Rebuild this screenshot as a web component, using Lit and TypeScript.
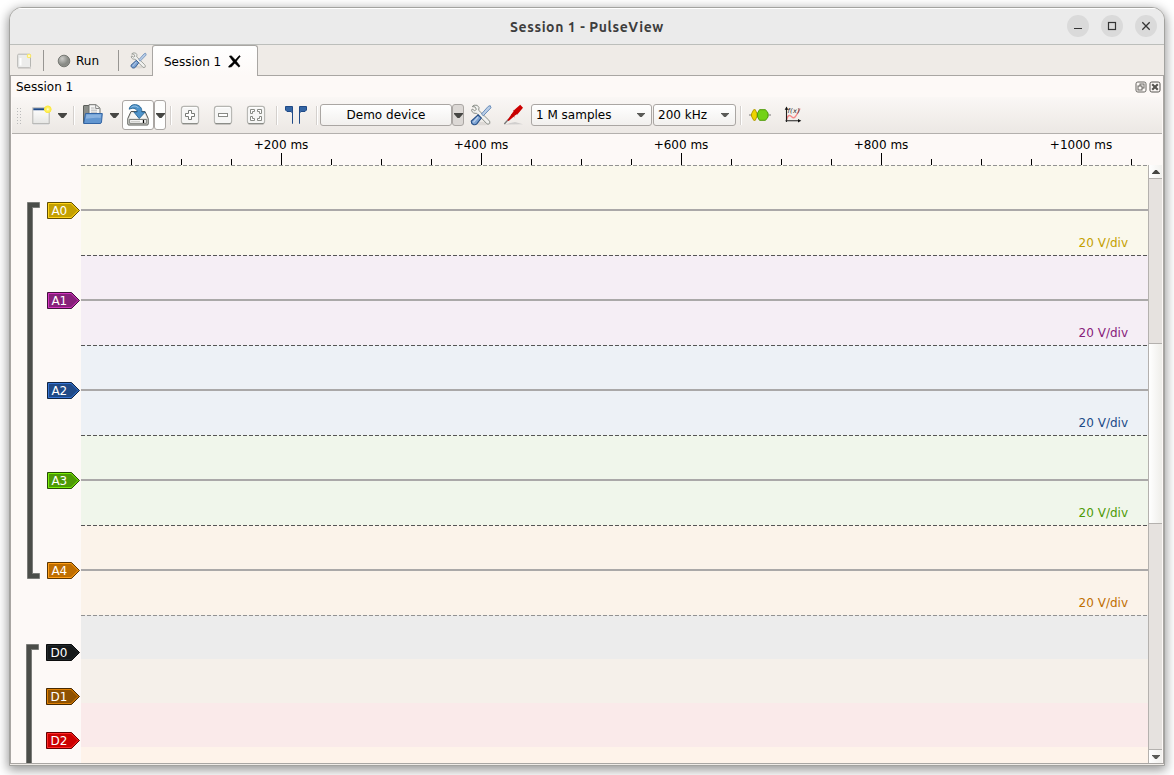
import { LitElement, html, svg, css } from "lit";
import { customElement } from "lit/decorators.js";

interface Trace {
  name: string;
  fill: string;
  light: string;
  dark: string;
  band: string;
}

const ANALOG: Trace[] = [
  { name: "A0", fill: "#c4a000", light: "#ffd319", dark: "#624f00", band: "#faf8ec" },
  { name: "A1", fill: "#87207a", light: "#d435c0", dark: "#43103d", band: "#f5eef5" },
  { name: "A2", fill: "#204a87", light: "#3674d4", dark: "#102543", band: "#edf1f6" },
  { name: "A3", fill: "#4e9a06", light: "#78ee09", dark: "#274d03", band: "#f0f6eb" },
  { name: "A4", fill: "#bf6e00", light: "#ff9f19", dark: "#5f3700", band: "#fbf3ea" },
];

const DIGITAL: Trace[] = [
  { name: "D0", fill: "#16191a", light: "#22282a", dark: "#0b0c0d", band: "#ececec" },
  { name: "D1", fill: "#8f5202", light: "#df8003", dark: "#472901", band: "#f5f0ea" },
  { name: "D2", fill: "#cc0000", light: "#ff2b2b", dark: "#660000", band: "#faeaea" },
];

const flag = (t: Trace, width: number) => html`
  <svg class="flag" width=${width} height="17" viewBox="0 0 ${width} 17">
    <path d="M.5.5H${width - 8.5}L${width - 0.5} 8.5L${width - 8.5} 16.5H.5Z" fill=${t.fill} stroke=${t.dark}/>
    <path d="M1.5 1.5H${width - 8.9}L${width - 1.9} 8.5L${width - 8.9} 15.5H1.5Z" fill="none" stroke=${t.light}/>
    <text x="4.4" y="13" fill="#fff" font-size="12">${t.name}</text>
  </svg>`;

const down = html`<svg width="9" height="5" viewBox="0 0 9 5"><path d="M0 0H9V1L5.5 5H3.5L0 1Z" fill="#464643"/></svg>`;
const comboArrow = html`<svg width="8" height="4" viewBox="0 0 8 4"><path d="M0 0H8V.6L4.8 4H3.2L0 .6Z" fill="#5a5a57"/></svg>`;

const tools = (size: number) => html`
  <svg width=${size} height=${size} viewBox="0 0 22 22">
    <ellipse cx="12" cy="19.5" rx="9" ry="1.8" fill="#000" opacity=".08"/>
    <path d="M2.2 2.6L4 1.2L7.2 1.3L9 3.5L8.7 6.3L18.8 16.2C21 18 19.3 21.3 16.8 19.7L6.7 9.3C4.5 9.8 1.9 8.6 1.6 6.3L2.2 5L4.7 6.7L6.4 5.4L5 2.9Z" fill="#f1f1ef" stroke="#80847e" stroke-width=".9"/>
    <path d="M20.2 1.6L21 3.8L13.3 11.8L11.4 10L18.2 2.4Z" fill="#b9cde6" stroke="#4e78ad" stroke-width=".8"/>
    <path d="M8.2 10.8L11.3 14L7 19.7C4.8 21.9 1 20.4 1.3 17.1Z" fill="#7da3d3" stroke="#264f87" stroke-width="1.1"/>
    <path d="M8 13L3.4 18.3" stroke="#c0d3ec" stroke-width="1.2"/>
  </svg>`;

const newIcon = html`
  <svg width="20" height="20" viewBox="0 0 20 20">
    <defs><linearGradient id="sheet" x2="0" y2="1"><stop stop-color="#fff"/><stop offset="1" stop-color="#e6e6e4"/></linearGradient>
    <radialGradient id="spark"><stop stop-color="#fffff0"/><stop offset=".35" stop-color="#fff36a"/><stop offset=".8" stop-color="#fce83f"/><stop offset="1" stop-color="#fce83f" stop-opacity="0"/></radialGradient></defs>
    <rect x=".8" y="2.8" width="16.4" height="15.7" fill="url(#sheet)" stroke="#b5b5b2"/>
    <path d="M1.3 3.2H16.8V5.2H1.3Z" fill="#204a87"/><path d="M1 19.4H17" stroke="#ddd"/>
    <circle cx="15.8" cy="4.3" r="4.2" fill="url(#spark)"/>
  </svg>`;

const tabNewIcon = html`
  <svg width="15" height="16" viewBox="0 0 15 16">
    <rect x=".7" y="1.2" width="12.8" height="13.5" rx="1" fill="#ececeb" stroke="#b5b5b2"/>
    <path d="M3.5 5V12.5" stroke="#fff" stroke-width="2"/><path d="M1 15.4H14" stroke="#d5d2ce"/>
    <circle cx="12" cy="3" r="2.3" fill="#fbe96b"/><circle cx="12" cy="3" r="1" fill="#fffde0"/>
  </svg>`;

const openIcon = html`
  <svg width="21" height="21" viewBox="0 0 21 21">
    <path d="M1.5 19V2Q1.5 1.5 2 1.5H7.5L9.5 3.5H17V19Z" fill="#8a8d89" stroke="#5c5f5b"/>
    <path d="M7 10V.7H14L18 4.2V11H7Z" fill="#f6f6f5" stroke="#6f726e"/>
    <path d="M13.7 1V4.5H17.5" fill="none" stroke="#888"/><path d="M9 4H12.5M9 6.2H15M9 8.2H15" stroke="#a8a8a8" stroke-width=".8"/>
    <path d="M3.5 9.5H20.3L19.5 18Q19.3 19.5 18 19.5H1.7Z" fill="#6296d0" stroke="#3465a4"/>
    <path d="M4.4 10.6H19L18.6 14C12 13 8 14.5 3.8 14.8Z" fill="#8ab3e0"/>
  </svg>`;

const saveIcon = html`
  <svg width="22" height="22" viewBox="0 0 22 22">
    <path d="M4 7.5H18L21.2 14.5V20Q21.2 21 20.2 21H1.8Q.8 21 .8 20V14.5Z" fill="#e5e5e2" stroke="#555753"/>
    <path d="M4.7 8.7H17.3L19.5 14H2.5Z" fill="#f6f6f4"/>
    <rect x="2.7" y="15.5" width="16.6" height="3.8" fill="#fff" stroke="#70736f" stroke-width=".9"/>
    <path d="M4 17.5H13" stroke="#d0d0cd" stroke-width="1.5"/><path d="M16.5 16V19" stroke="#000" stroke-width="1.3"/>
    <path d="M2.2 5.2C2.6 .2 9.8-1 13.4 3C14.6 4.4 14.8 6 14.8 8H18.2L12.2 14.6L6.9 8H10.2C10.3 5 7 3.2 2.2 5.2Z" fill="#4f94cb" stroke="#276594" stroke-width=".9"/>
    <path d="M4.5 3.3C6.5 1.2 10 2 11.5 4" fill="none" stroke="#9bc5e5"/>
  </svg>`;

const zoomIcon = (kind: "in" | "out" | "fit") => html`
  <svg width="20" height="20" viewBox="0 0 20 20">
    <rect x="1.4" y="1.4" width="17.2" height="17.4" rx="2.6" fill="#f6f6f5" stroke="#b5b5b1" stroke-width="1.1"/>
    <path d="M2.5 18.8H17.5" stroke="#777a75" stroke-width="1.1"/><path d="M3 2.7H17" stroke="#fff"/>
    ${kind === "in" ? svg`<path d="M8.5 5.5H11.5V8.5H14.5V11.5H11.5V14.5H8.5V11.5H5.5V8.5H8.5Z" fill="#fff" stroke="#777a76"/>` : ""}
    ${kind === "out" ? svg`<rect x="5.5" y="8.5" width="9" height="3" fill="#fff" stroke="#888a85"/>` : ""}
    ${kind === "fit" ? svg`<path d="M4.5 4.5H8.5V6.5H6.5V8.5H4.5ZM11.5 4.5H15.5V8.5H13.5V6.5H11.5ZM4.5 11.5H6.5V13.5H8.5V15.5H4.5ZM13.5 11.5H15.5V15.5H11.5V13.5H13.5Z" fill="#fff" stroke="#888a85"/>` : ""}
  </svg>`;

const cursorsIcon = html`
  <svg width="22" height="18" viewBox="0 0 22 18">
    <path d="M.5.5H7.5V17.5V7L6 5.5H2L.5 4Z M21.5.5H14.5V17.5V7L16 5.5H20L21.5 4Z" fill="#3465a4" stroke="#204a87"/>
  </svg>`;

const probeIcon = html`
  <svg width="21" height="22" viewBox="0 0 21 22">
    <path d="M1 20.5L12 18L20 20.3Z" fill="#bbb" opacity=".6"/>
    <path d="M1.3 20L6 14.8" stroke="#777" stroke-width="1.3"/>
    <path d="M4.4 16.2L9.5 8.7L11.5 5.7L17.2.8L20 3.7L15.2 9.4L12.3 11.2L5.7 17Z" fill="#cc0000"/>
    <path d="M8 10.3L11.7 13M10.2 6.2L15 10.4" stroke="#a80000" stroke-width=".6"/>
  </svg>`;

const decoderIcon = html`
  <svg width="22" height="12" viewBox="0 0 22 12">
    <path d="M0 6H22" stroke="#777" stroke-width="1.2"/>
    <path d="M4.7.7H6.3L8 4.8V7.2L6.3 11.3H4.7L2.5 7.2V4.8Z" fill="#edd400" stroke="#b39b00"/>
    <path d="M10.5.7H16.5L19 4V8L16.5 11.3H10.5L8.6 8V4Z" fill="#73d216" stroke="#4e9a06"/>
  </svg>`;

const mathIcon = html`
  <svg width="18" height="18" viewBox="0 0 18 18">
    <path d="M2.5 14C4 8 6 9 8 11S12 11 16 2.5" fill="none" stroke="#f58a8a" stroke-width="1.4"/>
    <path d="M2.5 16V3M1.5 14.8H15" stroke="#222" stroke-width="1.1"/>
    <path d="M2.5 .6L4.3 3.8H.7ZM17.3 14.8L14 16.5V13.1Z" fill="#111"/>
    <text x="3.4" y="6.6" font-size="6.5" font-style="italic" fill="#222" textLength="12.5">f(x)</text>
  </svg>`;

@customElement("app-root")
export class AppRoot extends LitElement {
  static styles = css`
    :host { display: block; width: 1174px; height: 775px; overflow: hidden; background: #fff;
      font: 12px/16px "DejaVu Sans", sans-serif; color: #000; }
    * { box-sizing: border-box; }
    svg { display: block; flex: none; font-family: "DejaVu Sans", sans-serif; }
    .desktop { width: 1174px; height: 775px; padding: 7px 9px 9px 9px; overflow: hidden; }
    .window { width: 1156px; height: 759px; border: 1px solid #a3a3a0; border-radius: 13px 13px 0 0; overflow: hidden;
      box-shadow: 0 3px 11px 1px rgba(0,0,0,.42); background: #efebe7; display: flex; flex-direction: column; }
    .titlebar { height: 37px; flex: none; border-bottom: 1px solid #bcbebb; box-shadow: inset 0 1px #fff; background: #ebebeb;
      display: grid; grid-template-columns: 1fr auto 1fr; align-items: center; }
    .caption { grid-column: 2; font: bold 14px/20px "Ubuntu", "Noto Sans", sans-serif; letter-spacing: .6px; color: #3d3d3d; width: 154px; white-space: nowrap; padding-top: 2px; }
    .winbtns { display: flex; justify-content: flex-end; gap: 12px; padding-right: 7px; }
    .winbtn { width: 22px; height: 22px; border-radius: 50%; background: #dadada; display: grid; place-items: center; }
    .tabbar { height: 31px; flex: none; display: flex; align-items: center; border-bottom: 1px solid #a9a6a3; }
    .tabbar .new { margin: 1px 11px 0 7px; }
    .tabbar .setup { margin: 1px 0 0 11px; }
    .vline { width: 1px; height: 21px; background: #979592; margin-top: 1px; }
    .run { display: flex; align-items: center; gap: 5px; margin-left: 13px; width: 61px; padding-top: 2px; }
    .run svg { margin-top: -1px; }
    .tab { align-self: flex-start; width: 106px; height: 31px; margin-left: 5px; border: 1px solid #a9a6a3; border-bottom: 0; border-radius: 3px 3px 0 0;
      background: linear-gradient(#fff, #fdf9f7); display: flex; align-items: center; padding: 2px 0 0 11px; gap: 7px; position: relative; }
    .tab svg { margin-top: -1px; }
    .client { flex: 1; min-height: 0; border: solid #a9a6a3; border-width: 0 1px 1px 1px; background: #fdf9f7; display: flex; flex-direction: column; margin-bottom: 1px; }
    .docktitle { height: 21px; flex: none; display: flex; align-items: center; padding: 1px 2px 0 5px; }
    .docktitle .name { flex: 1; }
    .docktitle svg + svg { margin-left: 2px; }
    .docktitle svg { margin-top: -1px; }
    .toolbar { height: 37px; flex: none; margin: 0 1px; background: linear-gradient(#faf7f5, #ece8e4); border-bottom: 1px solid #b3b0ad;
      display: flex; align-items: center; }
    .grip { width: 6px; height: 17px; background: radial-gradient(circle, #bbb 35%, transparent 45%) 0 0 / 3px 3px; margin: 0 10px 0 4px; }
    .sep { width: 2px; height: 19px; background: linear-gradient(90deg, #d4d0cd 50%, #fff 50%); }
    .tbtn { height: 30px; border: 1px solid #aaa6a3; border-radius: 3px; background: linear-gradient(#fdfdfc, #fff); display: grid; place-items: center; }
    .tbtn.save { width: 32px; margin-left: 3px; }
    .tbtn.split { width: 12px; }
    .combo { height: 22px; border: 1px solid #aaa6a3; border-radius: 3px; background: linear-gradient(#fff, #f2f0ee);
      display: flex; align-items: center; justify-content: space-between; padding: 0 6px 0 4px; }
    .combo.device { width: 132px; margin-left: 2px; justify-content: center; padding: 0; }
    .combo.more { width: 12px; padding: 0; background: #dcd8d5; justify-content: center; }
    .combo.count { width: 121px; margin-left: 7px; }
    .combo.rate { width: 83px; margin-left: 1px; }
    .open { margin: -2px 0 0 7px; }
    .ruler { height: 31px; flex: none; margin-left: 70px; }
    .view { flex: 1; min-height: 0; display: flex; }
    .traces { flex: 1; min-width: 0; overflow: hidden; }
    .group { display: flex; }
    .bracket { width: 36px; flex: none; }
    .digital .bracket { width: 35px; }
    .rows { flex: 1; min-width: 0; }
    .row { display: flex; }
    .head { width: 34px; flex: none; display: flex; justify-content: flex-end; padding-right: 1px; }
    .analog .head { padding-top: 37px; }
    .digital .head { padding-top: 29px; width: 35px; }
    .digital .first .head { padding-top: 28px; }
    .analog .row { height: 90px; }
    .digital .row { height: 44px; }
    .digital .row.first { height: 43px; }
    .digital .row.last { height: 17px; }
    .band { flex: 1; display: flex; flex-direction: column; }
    .dash { height: 1px; background: repeating-linear-gradient(90deg, var(--dash, #555) 0 4px, transparent 4px 6px); }
    .row.first .dash, .tail { --dash: #929292; }
    .tail { height: 1px; flex: none; margin-left: 35px; background-color: #ececec; }
    .zero { height: 2px; margin-top: 43px; background: #aaa8a8; }
    .scale { padding-top: 24px; padding-right: 20px; text-align: right; }
    .scroll { width: 14px; flex: none; border-left: 1px solid #b4b1ae; background: #e6e2df; display: flex; flex-direction: column; margin-right: 1px; }
    .arrow { height: 14px; flex: none; background: linear-gradient(90deg, #fff, #f2f1ee); border-bottom: 1px solid #b4b1ae; display: grid; place-items: center; padding-top: 1px; }
    .arrow.end { margin-top: auto; border-bottom: 0; border-top: 1px solid #b4b1ae; padding: 0; }
    .thumb { height: 181px; margin-top: 164px; background: linear-gradient(90deg, #fff, #efeeea); border: solid #b4b1ae; border-width: 1px 0; }
    .m4 { margin-left: 4px; } .m6 { margin-left: 6px; } .m7 { margin-left: 7px; } .m8 { margin-left: 8px; }
    .m9 { margin-left: 9px; } .m10 { margin-left: 10px; } .m11 { margin-left: 11px; } .m13 { margin-left: 13px; }
  `;

  private renderRuler() {
    const ticks = Array.from({ length: 21 }, (_, i) => 50 + i * 50);
    return html`<svg class="ruler" width="1082" height="31" viewBox="0 0 1082 31">
      ${ticks.map(x => svg`<path d=${x % 200 === 0 ? `M${x + 0.5} 19V31` : `M${x + 0.5} 25V31`} stroke="#000"/>`)}
      ${[200, 400, 600, 800, 1000].map(x => svg`<text x=${x} y="15" font-size="12" text-anchor="middle">+${x} ms</text>`)}
    </svg>`;
  }

  render() {
    return html`<div class="desktop"><div class="window">
      <div class="titlebar">
        <div class="caption">Session 1 - PulseView</div>
        <div class="winbtns">
          <div class="winbtn"><svg width="10" height="10"><path d="M1 7.5H9" stroke="#333" stroke-width="1.1"/></svg></div>
          <div class="winbtn"><svg width="10" height="10"><rect x="1.5" y="1.5" width="7" height="7" fill="none" stroke="#333" stroke-width="1.2"/></svg></div>
          <div class="winbtn"><svg width="10" height="10"><path d="M1.3 1.3L8.7 8.7M8.7 1.3L1.3 8.7" stroke="#333" stroke-width="1.3"/></svg></div>
        </div>
      </div>
      <div class="tabbar">
        <span class="new">${tabNewIcon}</span>
        <span class="vline"></span>
        <div class="run">
          <svg width="14" height="14" viewBox="0 0 14 14"><defs><radialGradient id="led" cx=".35" cy=".3"><stop stop-color="#ccccc9"/><stop offset="1" stop-color="#898b86"/></radialGradient></defs><circle cx="7" cy="7" r="5.8" fill="url(#led)" stroke="#777974"/></svg>
          <span>Run</span>
        </div>
        <span class="vline"></span>
        <span class="setup">${tools(17)}</span>
        <div class="tab"><span>Session 1</span>
          <svg width="13" height="13" viewBox="0 0 13 13"><path d="M1.3 1.2L3.3.7Q7.5 4.5 12 11L11 12.2Q5 7.5 1.3 1.2ZM11.3.5L12.3 1.3Q8 7 3.6 11.8L.8 12.3L.7 11.2Q6.5 6.5 11.3.5Z" fill="#000" stroke="#000" stroke-width=".5"/></svg>
        </div>
      </div>
      <div class="client">
        <div class="docktitle"><span class="name">Session 1</span>
          <svg width="12" height="12" viewBox="0 0 12 12" fill="none" stroke="#666460"><rect x="1" y="1" width="10" height="10" rx="1.8"/><rect x="5" y="3" width="4" height="4"/><rect x="3" y="5" width="4" height="4" fill="#fdf9f7"/></svg>
          <svg width="12" height="12" viewBox="0 0 12 12" fill="none" stroke="#55534f"><rect x="1" y="1" width="10" height="10" rx="1.8"/><path d="M3.2 3.2L8.8 8.8M8.8 3.2L3.2 8.8" stroke-width="2.1"/></svg>
        </div>
        <div class="toolbar">
          <span class="grip"></span>
          <span>${newIcon}</span><span class="m6">${down}</span>
          <span class="sep m6"></span>
          <span class="open">${openIcon}</span><span class="m7">${down}</span>
          <span class="tbtn save">${saveIcon}</span>
          <span class="tbtn split">${down}</span>
          <span class="sep m4"></span>
          <span class="m8">${zoomIcon("in")}</span>
          <span class="m13">${zoomIcon("out")}</span>
          <span class="m13">${zoomIcon("fit")}</span>
          <span class="sep m10"></span>
          <span class="m7">${cursorsIcon}</span>
          <span class="sep m9"></span>
          <span class="combo device">Demo device</span>
          <span class="combo more">${down}</span>
          <span class="m6">${tools(22)}</span>
          <span class="m11">${probeIcon}</span>
          <span class="combo count">1 M samples ${comboArrow}</span>
          <span class="combo rate">200 kHz ${comboArrow}</span>
          <span class="sep m4"></span>
          <span class="m7">${decoderIcon}</span>
          <span class="m13">${mathIcon}</span>
        </div>
        ${this.renderRuler()}
        <div class="view">
          <div class="traces">
            <div class="group analog">
              <div class="bracket"><svg width="36" height="450" viewBox="0 0 36 450"><path d="M28.5 37.5H16.5V413.5H28.5V408.5H21.5V42.5H28.5Z" fill="#4b4d49" stroke="#7b7c79"/></svg></div>
              <div class="rows">
                ${ANALOG.map((t, i) => html`<div class="row ${i === 0 ? "first" : ""}">
                  <div class="head">${flag(t, 33)}</div>
                  <div class="band" style="background:${t.band};color:${t.fill}"><div class="dash"></div><div class="zero"></div><div class="scale">20 V/div</div></div>
                </div>`)}
              </div>
            </div>
            <div class="group digital">
              <div class="bracket"><svg width="35" height="148" viewBox="0 0 35 148"><path d="M27.5 29.5H15.5V150H20.5V34.5H27.5Z" fill="#4b4d49" stroke="#7b7c79"/></svg></div>
              <div class="rows">
                <div class="tail dash"></div>
                ${DIGITAL.map((t, i) => html`<div class="row ${i === 0 ? "first" : ""}">
                  <div class="head">${flag(t, 34)}</div><div class="band" style="background:${t.band}"></div>
                </div>`)}
                <div class="row last"><div class="head"></div><div class="band" style="background:#fef3ea"></div></div>
              </div>
            </div>
          </div>
          <div class="scroll">
            <div class="arrow"><svg width="8" height="4" viewBox="0 0 8 4"><path d="M0 4V3.4L3.2 0H4.8L8 3.4V4Z" fill="#464643"/></svg></div>
            <div class="thumb"></div>
            <div class="arrow end">${comboArrow}</div>
          </div>
        </div>
      </div>
    </div></div>`;
  }
}
